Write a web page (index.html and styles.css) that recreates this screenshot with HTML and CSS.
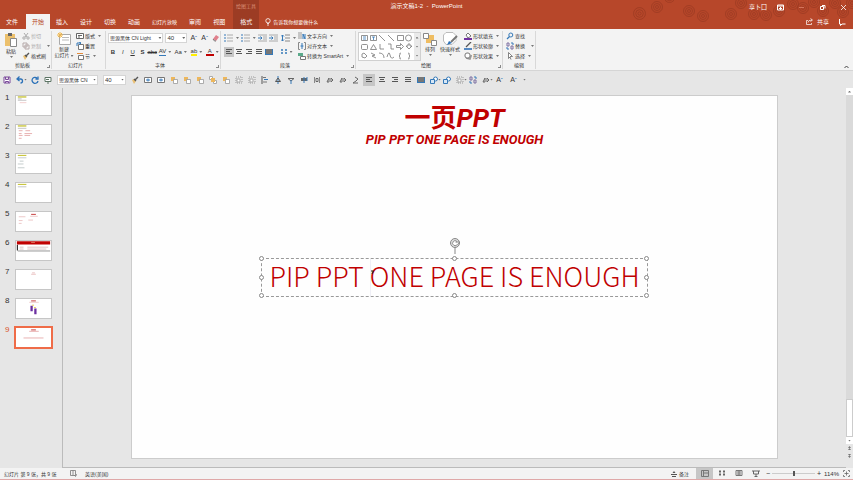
FILE: index.html
```
<!DOCTYPE html>
<html lang="zh-CN">
<head>
    <meta charset="UTF-8">
    <meta name="viewport" content="width=device-width, initial-scale=1.0">
    <title>演示文稿1-2 - PowerPoint</title>
    <link rel="stylesheet" href="styles.css">
</head>
<body>
    <!-- shared icons -->
    <svg class="sprite" aria-hidden="true">
        <symbol id="rings" viewBox="0 0 12 12"><g fill="none" stroke="#9a3a22" stroke-width=".7"><circle cx="6" cy="6" r="5.5"/><circle cx="6" cy="6" r="3.5"/><circle cx="6" cy="6" r="1.5"/></g></symbol>
        <symbol id="cut" viewBox="0 0 8 8"><path d="M2 1l3 4M6 1L3 5" stroke="#aaa" fill="none"/><circle cx="2" cy="6" r="1.2" fill="none" stroke="#aaa"/><circle cx="6" cy="6" r="1.2" fill="none" stroke="#aaa"/></symbol>
        <symbol id="copy" viewBox="0 0 8 8"><path d="M1 1h4v4H1zM3 3h4v4H3z" fill="#f3f3f3" stroke="#b5a8a8"/></symbol>
        <symbol id="brush" viewBox="0 0 8 8"><path d="M1 4l2-1 2 2-2 3z" fill="#eabf72"/><path d="M3 3l2 2M4 4l3-3" stroke="#555" stroke-width="1.4"/></symbol>
        <symbol id="layout" viewBox="0 0 8 8"><path d="M.5 1.5h7v5h-7zM2 3.500h4M2 5h2" fill="#fff" stroke="#666"/></symbol>
        <symbol id="reset" viewBox="0 0 8 8"><path d="M2.500 2.500h5v5h-5z" fill="#fff" stroke="#777"/><path d="M1 4V1h4M3 0L5 1 3 3" fill="none" stroke="#3579b8"/></symbol>
        <symbol id="section" viewBox="0 0 8 8"><path d="M1 1.500h6" stroke="#e58b3a"/><path d="M2.500 3.500h5v4h-5z" fill="#fff" stroke="#777"/></symbol>
        <symbol id="bullets" viewBox="0 0 10 8"><path d="M0 1h2M0 4h2M0 7h2" stroke="#3579b8"/><path d="M3 1h6M3 4h6M3 7h6" stroke="#aaa"/></symbol>
        <symbol id="indent" viewBox="0 0 10 8"><path d="M0 1h9M5 3h4M5 5h4M0 7h9" stroke="#aaa"/><path d="M0 4h4M2.500 2.500L4 4 2.500 5.500" stroke="#3579b8" fill="none"/></symbol>
        <symbol id="spacing" viewBox="0 0 10 8"><path d="M1.500 1v6M0 2.500L1.500 1 3 2.500M0 5.500L1.500 7 3 5.500" stroke="#3579b8" fill="none"/><path d="M4 1h5M4 4h5M4 7h5" stroke="#888"/></symbol>
        <symbol id="al" viewBox="0 0 8 8"><path d="M1 1.500h6M1 3.500h4M1 5.500h6" stroke="#555"/></symbol>
        <symbol id="ac" viewBox="0 0 8 8"><path d="M1 1.500h6M2 3.500h4M1 5.500h6" stroke="#555"/></symbol>
        <symbol id="ar" viewBox="0 0 8 8"><path d="M1 1.500h6M3 3.500h4M1 5.500h6" stroke="#555"/></symbol>
        <symbol id="aj" viewBox="0 0 8 8"><path d="M1 1.500h6M1 3.500h6M1 5.500h6" stroke="#555"/></symbol>
        <symbol id="dist" viewBox="0 0 8 8"><path d="M1 1h6v5H1z" fill="#777"/><path d="M.5 1v6M7.500 1v6M1 6.500h6" stroke="#3579b8"/></symbol>
        <symbol id="cols" viewBox="0 0 8 8"><path d="M1 2h2M5 2h2M1 5h2M5 5h2" stroke="#3579b8" stroke-width="1.500"/></symbol>
        <symbol id="textdir" viewBox="0 0 8 8"><path d="M1 0v7M3 0v7" stroke="#999"/><path d="M5 7V2l2 5V2" stroke="#3579b8" fill="none"/></symbol>
        <symbol id="textalign" viewBox="0 0 8 8"><path d="M2 .5H.5v7H2M6 .5h1.500v7H6" fill="none" stroke="#888"/><path d="M4 1v6M2.500 4h3" stroke="#3579b8"/></symbol>
        <symbol id="smartart" viewBox="0 0 8 8"><path d="M0 1h5v3H0z" fill="#5ba98a"/><path d="M2.500 4.500h5v3h-5z" fill="#fff" stroke="#777"/></symbol>
        <symbol id="fill" viewBox="0 0 8 8"><path d="M2 3l2-2 3 3-3 2z" fill="#fff" stroke="#555" stroke-width=".8"/><path d="M0 7h8" stroke="#7030a0" stroke-width="2"/></symbol>
        <symbol id="outline" viewBox="0 0 8 8"><path d="M2 5l5-5" stroke="#555" stroke-width="1.300"/><path d="M0 7h8" stroke="#2f6eb5" stroke-width="1.600"/></symbol>
        <symbol id="effect" viewBox="0 0 8 8"><path d="M2 6l4 1 1.500-4" stroke="#999" stroke-width="1.500" fill="none"/><rect x="1" y="1" width="5" height="5" rx="2" fill="#fff" stroke="#777"/></symbol>
        <symbol id="find" viewBox="0 0 8 8"><circle cx="4.800" cy="3" r="2" fill="none" stroke="#3579b8"/><path d="M3.500 4.500L1 7" stroke="#3579b8" stroke-width="1.300"/></symbol>
        <symbol id="replace" viewBox="0 0 8 8"><path d="M1 1h2v3H1zM5 4h2v3H5z" fill="none" stroke="#7d6ea0"/><path d="M5 1h2v2M3 7H1V5" stroke="#3579b8" fill="none"/></symbol>
        <symbol id="pointer" viewBox="0 0 8 8"><path d="M2.500 .5v6l1.500-1.500 1 2.500M2.500.5l4 4H4" fill="#fff" stroke="#666" stroke-width=".8"/></symbol>
        <symbol id="save" viewBox="0 0 8 8"><path d="M1 1h6v6H1zM2.500 1v2.500h3V1M2.500 7V5.500h3V7" fill="#fff" stroke="#7b4a9b"/></symbol>
        <symbol id="undo" viewBox="0 0 8 8"><path d="M1 3h3.500a2 2 0 010 4M3.500 .5L1 3l2.500 2" stroke="#2b71b8" stroke-width="1.300" fill="none"/></symbol>
        <symbol id="redo" viewBox="0 0 8 8"><path d="M6 2a3 3 0 101 3M7 .5V3H4.500" stroke="#2b71b8" stroke-width="1.300" fill="none"/></symbol>
        <symbol id="show" viewBox="0 0 8 8"><path d="M1 1.500h6v4H1zM4 5v3M2 3.500h3" fill="#fff" stroke="#5d7565"/></symbol>
        <symbol id="box" viewBox="0 0 8 8"><path d="M.5 1.500h7v5h-7z" fill="#fff" stroke="#777"/><path d="M2 4h4M4 2.500v3" stroke="#3579b8"/></symbol>
        <symbol id="layers" viewBox="0 0 8 8"><path d="M1 1h4v4H1z" fill="#edb75c"/><path d="M3.500 3.500h4v4h-4z" fill="#fff" stroke="#999" stroke-width=".8"/></symbol>
        <symbol id="front" viewBox="0 0 8 8"><path d="M.5.5h3v3h-3zM4.500 4.500h3v3h-3z" fill="#fff" stroke="#aaa"/><path d="M2 2h4v4H2z" fill="#edb75c"/></symbol>
        <symbol id="group" viewBox="0 0 8 8"><path d="M1 1h6v6H1z" fill="none" stroke="#999" stroke-dasharray="1 1"/><path d="M2 3h3v3H2z" fill="#fff" stroke="#aaa"/></symbol>
        <symbol id="posleft" viewBox="0 0 8 8"><path d="M1 0v8" stroke="#555"/><path d="M2 1.500h3M2 6h4" stroke="#777"/><path d="M3 3.500h4" stroke="#3579b8"/></symbol>
        <symbol id="posmid" viewBox="0 0 8 8"><path d="M4 0v8" stroke="#3579b8"/><path d="M1.500 5.500L4 2l2.500 3.500z" fill="none" stroke="#555"/></symbol>
        <symbol id="posdown" viewBox="0 0 8 8"><path d="M1 2.500h6L4 5z" fill="none" stroke="#666"/><path d="M4 4v4" stroke="#3579b8"/></symbol>
        <symbol id="bars" viewBox="0 0 8 8"><path d="M1 2h6v3H1z" fill="#666"/><path d="M4 1v6M7 1v4" stroke="#3579b8"/></symbol>
        <symbol id="posbars" viewBox="0 0 8 8"><path d="M1.500 1v6M6.500 1v6" stroke="#888"/><path d="M3 2.500h2v3H3z" fill="#fff" stroke="#666"/></symbol>
        <symbol id="flip" viewBox="0 0 8 8"><path d="M1 6l2-4v4zM5 2v4l2-2z" fill="#fff" stroke="#666"/></symbol>
        <symbol id="node" viewBox="0 0 8 8"><path d="M3 1l3 2-2 2-3 2h5" fill="none" stroke="#666"/></symbol>
        <symbol id="shapes" viewBox="0 0 8 8"><circle cx="5.500" cy="3" r="2" fill="#fff" stroke="#3579b8"/><path d="M.5 3.500h4v4h-4z" fill="#d7e7f6" stroke="#3579b8"/></symbol>
    </svg>

    <header class="top">
        <svg class="pattern" viewBox="0 0 220 29" aria-hidden="true">
            <use href="#rings" x="0" y="7" width="13" height="13"/>
            <use href="#rings" x="18" y="1" width="12" height="12"/>
            <use href="#rings" x="31" y="-8" width="11" height="11"/>
            <use href="#rings" x="50" y="5" width="12" height="12"/>
            <use href="#rings" x="64" y="10" width="12" height="12"/>
            <use href="#rings" x="92" y="8" width="12" height="12"/>
            <use href="#rings" x="102" y="-3" width="12" height="12"/>
            <use href="#rings" x="115" y="8" width="12" height="12"/>
            <use href="#rings" x="127" y="9" width="12" height="12"/>
            <use href="#rings" x="140" y="5" width="12" height="12"/>
            <use href="#rings" x="154" y="-2" width="12" height="12"/>
            <use href="#rings" x="164" y="2" width="12" height="12"/>
            <use href="#rings" x="175" y="-4" width="12" height="12"/>
            <use href="#rings" x="184" y="5" width="12" height="12"/>
            <use href="#rings" x="196" y="-3" width="12" height="12"/>
            <use href="#rings" x="204" y="6" width="12" height="12"/>
            <use href="#rings" x="213" y="-3" width="12" height="12"/>
        </svg>
        <div class="titlebar">
            <div class="title-left"><span class="tools">绘图工具</span></div>
            <div class="doc-name">演示文稿1-2 &nbsp;-&nbsp; PowerPoint</div>
            <div class="window-buttons">
                <span class="user">享卜囗</span>
                <button aria-label="功能区显示选项"><svg width="7" height="7" viewBox="0 0 7 7"><path d="M.5 1h6v5h-6zM1 2h5M3.500 3v3M2 4.500h3" fill="none" stroke="#fff"/></svg></button>
                <button aria-label="最小化"><svg width="7" height="7" viewBox="0 0 7 7"><path d="M1 3.500h5" stroke="#d4745c"/></svg></button>
                <button aria-label="还原"><svg width="7" height="7" viewBox="0 0 7 7"><path d="M1.500 2.500h3v3h-3zM3 1.500h3v3" fill="none" stroke="#fff"/></svg></button>
                <button aria-label="关闭"><svg width="7" height="7" viewBox="0 0 7 7"><path d="M1 1l5 5M6 1L1 6" stroke="#fff" stroke-width=".8"/></svg></button>
            </div>
        </div>
        <nav class="tabs">
            <button class="tab file">文件</button>
            <button class="tab active">开始</button>
            <button class="tab">插入</button>
            <button class="tab">设计</button>
            <button class="tab">切换</button>
            <button class="tab">动画</button>
            <button class="tab long">幻灯片放映</button>
            <button class="tab">审阅</button>
            <button class="tab">视图</button>
            <button class="tab context">格式</button>
            <button class="tell-me"><svg width="6" height="8" viewBox="0 0 6 8"><circle cx="3" cy="2.800" r="2.200" fill="none" stroke="#fff" stroke-width=".8"/><path d="M2 5.500h2M2 7h2" stroke="#fff" stroke-width=".8"/></svg>告诉我你想要做什么</button>
            <div class="share">
                <button><svg width="7" height="7" viewBox="0 0 7 7"><path d="M2 2.500H.5v4h5V5M2 4.500q0-2.500 4-2.500M4.500.5L6.500 2 4.500 3.500" fill="none" stroke="#fff" stroke-width=".7"/></svg>共享</button>
                <button aria-label="批注"><svg width="8" height="8" viewBox="0 0 8 8"><path d="M1.500 1v5h1v1.500L4 6h3.500" fill="none" stroke="#fff"/></svg></button>
            </div>
        </nav>
    </header>

    <section class="ribbon">
        <div class="group clipboard">
            <div class="group-body">
                <button class="big">
                    <svg width="14" height="16" viewBox="0 0 14 16"><path d="M1 2h10v12H1z" fill="#ecc06c"/><path d="M4 1h4v3H4z" fill="#666"/><path d="M6.500 6.500h6v8h-6z" fill="#fff" stroke="#888"/></svg>
                    <span>粘贴</span><i class="arrow"></i>
                </button>
                <div class="stack">
                    <button class="off"><svg><use href="#cut"/></svg>剪切</button>
                    <button class="off"><svg><use href="#copy"/></svg>复制<i class="arrow far"></i></button>
                    <button><svg><use href="#brush"/></svg>格式刷</button>
                </div>
            </div>
            <div class="group-name">剪贴板</div><i class="launcher"></i>
        </div>
        <div class="group slides">
            <div class="group-body">
                <button class="big">
                    <svg width="14" height="14" viewBox="0 0 14 14"><path d="M2.500 2.500h11v10h-11z" fill="#fff" stroke="#aaa"/><path d="M5 5.500h7M5 8h7" stroke="#bbb"/><path d="M3 0v6M0 3h6M1 1l4 4M5 1L1 5" stroke="#f0b64a"/></svg>
                    <span>新建<br>幻灯片<i class="arrow"></i></span>
                </button>
                <div class="stack">
                    <button><svg><use href="#layout"/></svg>版式<i class="arrow"></i></button>
                    <button><svg><use href="#reset"/></svg>重置</button>
                    <button><svg><use href="#section"/></svg>节<i class="arrow"></i></button>
                </div>
            </div>
            <div class="group-name">幻灯片</div>
        </div>
        <div class="group font">
            <div class="group-body rows">
                <div class="row">
                    <span class="pick name"><select aria-label="字体"><option>思源黑体 CN Light</option></select></span>
                    <span class="pick size"><select aria-label="字号"><option>40</option></select></span>
                    <button class="letter">A<sup>ˆ</sup></button>
                    <button class="letter">A<sup>ˇ</sup></button>
                    <button class="letter" aria-label="清除格式"><svg viewBox="0 0 8 8"><path d="M1 5l3-4 3 2-3 4z" fill="#e0808c"/><path d="M1 5l1.500 2H4" stroke="#777" fill="none"/></svg></button>
                </div>
                <div class="row letters">
                    <button><b>B</b></button>
                    <button><em>I</em></button>
                    <button><u>U</u></button>
                    <button><b>S</b></button>
                    <button><s>abc</s></button>
                    <button class="wide"><span class="av">AV</span><i class="arrow"></i></button>
                    <button class="wide">Aa<i class="arrow"></i></button>
                    <button class="wide"><span class="mark">ab</span><i class="arrow"></i></button>
                    <button class="wide"><span class="color">A</span><i class="arrow"></i></button>
                </div>
            </div>
            <div class="group-name">字体</div><i class="launcher"></i>
        </div>
        <div class="group paragraph">
            <div class="group-body">
                <div class="rows">
                    <div class="row para-row">
                        <button aria-label="项目符号"><svg><use href="#bullets"/></svg><i class="arrow"></i></button>
                        <button aria-label="编号"><svg><use href="#bullets"/></svg><i class="arrow"></i></button>
                        <button aria-label="减少缩进"><svg><use href="#indent"/></svg></button>
                        <button aria-label="增加缩进"><svg><use href="#indent"/></svg></button>
                        <button aria-label="行距"><svg><use href="#spacing"/></svg><i class="arrow"></i></button>
                    </div>
                    <div class="row align-row">
                        <button class="on" aria-label="左对齐"><svg><use href="#al"/></svg></button>
                        <button aria-label="居中"><svg><use href="#ac"/></svg></button>
                        <button aria-label="右对齐"><svg><use href="#ar"/></svg></button>
                        <button aria-label="两端对齐"><svg><use href="#aj"/></svg></button>
                        <button aria-label="分散对齐"><svg><use href="#dist"/></svg></button>
                        <button class="columns" aria-label="分栏"><svg><use href="#cols"/></svg><i class="arrow"></i></button>
                    </div>
                </div>
                <div class="stack">
                    <button><svg><use href="#textdir"/></svg>文字方向<i class="arrow"></i></button>
                    <button><svg><use href="#textalign"/></svg>对齐文本<i class="arrow"></i></button>
                    <button><svg><use href="#smartart"/></svg>转换为 SmartArt<i class="arrow"></i></button>
                </div>
            </div>
            <div class="group-name">段落</div><i class="launcher"></i>
        </div>
        <div class="group drawing">
            <div class="group-body">
                <div class="gallery">
                    <svg width="55" height="27" viewBox="0 0 55 27" fill="none" stroke="#777" stroke-width=".8">
                        <path d="M2.500 2.500h6v5h-6zM11.500 2.500h6v5h-6z"/><path d="M4 4h3M4 6h3M13 4h3M14.500 4v3" stroke="#3579b8"/>
                        <path d="M20 2l6 6M29 2l6 6M38.500 2.500h6v5h-6z"/><circle cx="49.500" cy="5" r="3"/>
                        <rect x="2.500" y="11.500" width="6" height="5" rx="1"/><path d="M11.500 16.500l3-5 3 5zM21 11v5h4M29 11h3v5h3M37.500 12.500h4v-2l3 3-3 3v-2h-4zM47 13h2v-2h2v2h2l-3 3z"/>
                        <path d="M3 24v-3l2-1 3 3-2 2zM12 20l4 2-3 1 4 2M20 20q5 0 5 5M28 24q2-7 3-2t4 2M42 20q-2 0-1 2l-1 1 1 1q-1 2 1 2M49 20q2 0 1 2l1 1-1 1q1 2-1 2"/>
                    </svg>
                    <div class="gallery-bar"><i class="arrow up"></i><i class="arrow"></i><i class="arrow"></i></div>
                </div>
                <button class="big arrange">
                    <svg width="14" height="14" viewBox="0 0 14 14"><path d="M3 3h8v8H3z" fill="#efbd62"/><path d="M.5 1.500h5v5h-5zM8.500 8.500h5v5h-5z" fill="#fff" stroke="#888"/></svg>
                    <span>排列</span><i class="arrow"></i>
                </button>
                <button class="big quick">
                    <svg width="15" height="14" viewBox="0 0 15 14"><path d="M3 .5h7l3 3v5l-4 4H3L.5 9V3z" fill="#fff" stroke="#bbb"/><path d="M14 4l-6 6" stroke="#777" stroke-width="2"/><path d="M4 13l2-4 3 2z" fill="#2b71b8"/></svg>
                    <span>快速样式</span><i class="arrow"></i>
                </button>
                <div class="stack">
                    <button><svg><use href="#fill"/></svg>形状填充<i class="arrow"></i></button>
                    <button><svg><use href="#outline"/></svg>形状轮廓<i class="arrow"></i></button>
                    <button><svg><use href="#effect"/></svg>形状效果<i class="arrow"></i></button>
                </div>
            </div>
            <div class="group-name">绘图</div><i class="launcher"></i>
        </div>
        <div class="group editing">
            <div class="group-body">
                <div class="stack">
                    <button><svg><use href="#find"/></svg>查找</button>
                    <button><svg><use href="#replace"/></svg>替换<i class="arrow far"></i></button>
                    <button><svg><use href="#pointer"/></svg>选择<i class="arrow"></i></button>
                </div>
            </div>
            <div class="group-name">编辑</div>
        </div>
        <button class="collapse" aria-label="折叠功能区"><svg width="5" height="4" viewBox="0 0 5 4"><path d="M.5 3l2-2 2 2" fill="none" stroke="#444"/></svg></button>
    </section>

    <div class="quick-bar">
        <button><svg><use href="#save"/></svg></button>
        <button><svg><use href="#undo"/></svg><i class="arrow"></i></button>
        <button class="redo"><svg><use href="#redo"/></svg></button>
        <button><svg><use href="#show"/></svg></button>
        <span class="pick q-name"><select aria-label="字体"><option>思源黑体 CN</option></select></span>
        <span class="pick q-size"><select aria-label="字号"><option>40</option></select></span>
        <button><svg><use href="#brush"/></svg></button>
        <button><svg><use href="#box"/></svg></button>
        <button><svg><use href="#box"/></svg></button>
        <button><svg><use href="#layers"/></svg></button>
        <button><svg><use href="#layers"/></svg></button>
        <button><svg><use href="#layers"/></svg></button>
        <button><svg><use href="#front"/></svg></button>
        <button><svg><use href="#layers"/></svg></button>
        <button><svg><use href="#group"/></svg></button>
        <button><svg><use href="#group"/></svg></button>
        <button><svg><use href="#posleft"/></svg></button>
        <button><svg><use href="#posmid"/></svg></button>
        <button><svg><use href="#posdown"/></svg></button>
        <button><svg><use href="#bars"/></svg></button>
        <button><svg><use href="#posbars"/></svg></button>
        <button><svg><use href="#flip"/></svg></button>
        <button><svg><use href="#flip"/></svg></button>
        <button><svg><use href="#node"/></svg></button>
        <button class="on"><svg><use href="#al"/></svg></button>
        <button><svg><use href="#ac"/></svg></button>
        <button><svg><use href="#ar"/></svg></button>
        <button><svg><use href="#aj"/></svg></button>
        <button><svg><use href="#dist"/></svg></button>
        <button><svg><use href="#shapes"/></svg><i class="arrow"></i></button>
        <button><svg><use href="#shapes"/></svg></button>
        <button><svg><use href="#group"/></svg><i class="arrow"></i></button>
        <button><svg><use href="#replace"/></svg></button>
        <button><svg><use href="#flip"/></svg><i class="arrow"></i></button>
        <button class="letter">A<sup>ˆ</sup></button>
        <button class="letter">A<sup>ˇ</sup></button>
        <button aria-label="自定义"><i class="arrow"></i></button>
    </div>

    <div class="workspace">
        <aside class="thumbs">
            <div class="thumb"><span>1</span><svg viewBox="0 0 35 20"><path d="M1 1h9" stroke="#c9c640" stroke-width="1.500"/><path d="M1 3h4M1 4.500h9" stroke="#999" stroke-width=".6"/><path d="M3 7h7" stroke="#e7a0a0" stroke-width=".5"/></svg></div>
            <div class="thumb"><span>2</span><svg viewBox="0 0 35 20"><path d="M1 1h9" stroke="#c9c640" stroke-width="1.500"/><path d="M1 3.500h9" stroke="#999" stroke-width=".6"/><path d="M2 6h4M9 6h5M2 9h3M8 9h8M2 11h4M8 11h6M2 14h3" stroke="#dd8c8c" stroke-width=".7"/></svg></div>
            <div class="thumb"><span>3</span><svg viewBox="0 0 35 20"><path d="M1 1.500h9" stroke="#c9c640" stroke-width="1.200"/><path d="M1 4h9M3 7.500h4M1 10.500h6M1 14.500h7" stroke="#9aa8a8" stroke-width=".6"/></svg></div>
            <div class="thumb"><span>4</span><svg viewBox="0 0 35 20"><path d="M1 1.500h9" stroke="#c9c640" stroke-width="1.200"/><path d="M1 4h9" stroke="#999" stroke-width=".6"/></svg></div>
            <div class="thumb"><span>5</span><svg viewBox="0 0 35 20"><path d="M15 2.500h5" stroke="#c43838"/><path d="M2 5h7M14 4.500h8M2 9h4M12 8.500h5M2 12h3" stroke="#e0a0a0" stroke-width=".6"/></svg></div>
            <div class="thumb"><span>6</span><svg viewBox="0 0 35 20"><path d="M0 2h35" stroke="#c00000" stroke-width="3.500"/><path d="M15 1.500h4" stroke="#f0a080" stroke-width=".7"/><path d="M.5 4v6" stroke="#000"/><path d="M3 6.500h4M11 6.500h22M3 8.500h4M11 8.500h20" stroke="#c49a9a" stroke-width=".6"/><path d="M1 10.500h34" stroke="#777" stroke-width=".8"/></svg></div>
            <div class="thumb"><span>7</span><svg viewBox="0 0 35 20"><path d="M16 3h3M15 4.500h5" stroke="#dc9a9a" stroke-width=".6"/></svg></div>
            <div class="thumb"><span>8</span><svg viewBox="0 0 35 20"><path d="M15 2h5" stroke="#c43838"/><path d="M13 3.500h10" stroke="#dc9a9a" stroke-width=".5"/><path d="M15.500 7v6M19.500 10v6" stroke="#6b2fa0" stroke-width="2.400"/><path d="M16 6.500h2M18 9h2" stroke="#e8c850"/></svg></div>
            <div class="thumb current"><span>9</span><svg viewBox="0 0 35 20"><path d="M15 2h5" stroke="#c43838"/><path d="M13 3.500h10M7 10.500h21" stroke="#dc8a8a" stroke-width=".7"/></svg></div>
        </aside>
        <main class="canvas">
            <div class="slide">
                <h1>一页<em>PPT</em></h1>
                <p class="subtitle">PIP PPT ONE PAGE IS ENOUGH</p>
                <div class="textbox">
                    PIP PPT ONE PAGE IS ENOUGH
                    <svg class="rotate" width="11" height="16" viewBox="0 0 11 16"><circle cx="5" cy="5" r="4.500" fill="#ddd" stroke="#888"/><path d="M7 3.500A2.500 2.500 0 107.500 6M5.500 4h4L8 6.500" fill="#fff" stroke="#777" stroke-width=".8"/><path d="M5 9.500V16" stroke="#888"/></svg>
                    <svg class="caret" width="4" height="37" viewBox="0 0 4 37"><path d="M.5 0v37" stroke="#8080c0" stroke-opacity=".12"/><path d="M1 12h2.500L2 15" stroke="#222" fill="none"/></svg>
                    <i class="handle nw"></i><i class="handle n"></i><i class="handle ne"></i>
                    <i class="handle w"></i><i class="handle e"></i>
                    <i class="handle sw"></i><i class="handle s"></i><i class="handle se"></i>
                </div>
            </div>
        </main>
        <div class="scrollbar">
            <button aria-label="向上滚动"><i class="arrow up"></i></button>
            <div class="track"><div class="scroll-thumb"></div></div>
            <button aria-label="向下滚动"><i class="arrow"></i></button>
            <button class="jump" aria-label="上一张"><i class="arrow up"></i><i class="arrow up"></i></button>
            <button class="jump" aria-label="下一张"><i class="arrow"></i><i class="arrow"></i></button>
        </div>
    </div>

    <footer class="status">
        <span class="page">幻灯片 第 9 张，共 9 张</span>
        <svg width="7" height="7" viewBox="0 0 7 7"><path d="M.5.5h5v5h-5zM3 .5v5M4.500 5l1 1.500L7 4" fill="none" stroke="#777" stroke-width=".8"/></svg>
        <span class="lang">英语(美国)</span>
        <div class="status-right">
            <button class="notes"><svg width="6" height="6" viewBox="0 0 6 6"><path d="M0 3.500h6M1 5.500h4" stroke="#555"/><path d="M3 0L4.500 2h-3z" fill="#555"/></svg>备注</button>
            <button class="view on" aria-label="普通视图"><svg width="8" height="7" viewBox="0 0 8 7"><path d="M.5.5h7v6h-7zM2.500.5v6M3 3h4" fill="none" stroke="#777"/></svg></button>
            <button class="view" aria-label="浏览视图"><svg width="8" height="7" viewBox="0 0 8 7"><path d="M1 1.500h2M5 1.500h2M1 4.500h2M5 4.500h2" stroke="#666" stroke-width="2"/></svg></button>
            <button class="view" aria-label="阅读视图"><svg width="8" height="7" viewBox="0 0 8 7"><path d="M1 .5h6v5H1zM4 .5v5M2 2h4M2 4h4" fill="none" stroke="#777"/></svg></button>
            <button class="view" aria-label="放映"><svg width="8" height="7" viewBox="0 0 8 7"><path d="M0 1h8M1.500 1v3h5V1M4 4v3M2.500 6.500h3" fill="none" stroke="#666"/></svg></button>
            <button class="zoom-step">−</button>
            <input type="range" aria-label="缩放" min="0" max="100" value="50">
            <button class="zoom-step">+</button>
            <span class="percent">114%</span>
            <button class="fit" aria-label="适应窗口"><svg width="7" height="7" viewBox="0 0 7 7"><path d="M.5 2V.5H2M5 .5h1.500V2M6.500 5v1.500H5M2 6.500H.5V5M3.500 1.500v4M1.500 3.500h4" fill="none" stroke="#666" stroke-width=".8"/></svg></button>
        </div>
    </footer>
</body>
</html>
```
FILE: styles.css
```
* {
    box-sizing: border-box;
}

body {
    margin: 0;
    height: 100vh;
    display: flex;
    flex-direction: column;
    overflow: hidden;
    background-color: #e6e6e6;
    color: #333;
    font-family: "Liberation Sans", "Noto Sans CJK SC", sans-serif;
    font-size: 5px;
    line-height: 8px;
}

button {
    display: flex;
    align-items: center;
    padding: 0;
    border: none;
    background: none;
    color: inherit;
    font: inherit;
    white-space: nowrap;
    cursor: pointer;
}

svg {
    flex: none;
    display: block;
}

.sprite {
    position: absolute;
    width: 0;
    height: 0;
}

.arrow {
    flex: none;
    display: inline-block;
    width: 3px;
    height: 2px;
    margin-left: 2px;
    background-color: #777;
    clip-path: polygon(0 0, 100% 0, 50% 100%);
}

.arrow.up {
    clip-path: polygon(50% 0, 100% 100%, 0 100%);
}

.on {
    background-color: #c6c6c6;
}

/* title bar and tabs */
.top {
    position: relative;
    flex: none;
    background-color: #b7472a;
    color: #fff;
    font-size: 6px;
}

.pattern {
    position: absolute;
    top: 0;
    right: 0;
    width: 220px;
    height: 29px;
}

.titlebar {
    position: relative;
    display: grid;
    grid-template-columns: 1fr auto 1fr;
    height: 14px;
    line-height: 13px;
}

.tools {
    display: block;
    width: 26px;
    height: 14px;
    margin-left: 233px;
    background-color: #9c3c24;
    color: #d98d75;
    font-size: 5px;
    text-align: center;
}

.window-buttons {
    display: flex;
    justify-content: flex-end;
    align-items: center;
    gap: 14px;
    padding-right: 6px;
}

.user {
    margin-right: -4px;
}

.tabs {
    position: relative;
    display: flex;
    height: 15px;
}

.tab {
    justify-content: center;
    padding: 0 6px;
}

.tab.file {
    padding: 0 8px 0 6px;
}

.tab.active {
    background-color: #f3f3f3;
    color: #b7472a;
}

.tab.long {
    font-size: 5px;
}

.tab.context {
    width: 26px;
    margin-left: 2px;
    background-color: #9c3c24;
}

.tell-me {
    gap: 2px;
    margin-left: 6px;
    font-size: 5px;
}

.share {
    display: flex;
    gap: 9px;
    margin-left: auto;
    padding-right: 7px;
}

.share button {
    gap: 4px;
}

/* ribbon */
.ribbon {
    position: relative;
    flex: none;
    display: flex;
    height: 42px;
    padding: 2px 0 1px;
    border-bottom: 1px solid #d5d5d5;
    background-color: #f3f3f3;
}

.group {
    position: relative;
    display: flex;
    flex-direction: column;
    border-right: 1px solid #d8d8d8;
}

.group-body {
    flex: 1;
    display: flex;
}

.group-name {
    height: 8px;
    padding-right: 6px;
    text-align: center;
}

.editing .group-name {
    padding-right: 0;
}

.launcher {
    position: absolute;
    right: 1px;
    bottom: 1px;
    width: 3px;
    height: 3px;
    border-right: 1px solid #888;
    border-bottom: 1px solid #888;
}

.clipboard {
    width: 52px;
}

.slides {
    width: 54px;
}

.font {
    width: 115px;
}

.paragraph {
    width: 135px;
}

.drawing {
    width: 147px;
}

.editing {
    width: 33px;
}

.big {
    flex-direction: column;
    width: 22px;
    margin-top: 1px;
    line-height: 6px;
}

.big .arrow {
    margin: 2px 0 0 1px;
}

.stack {
    display: flex;
    flex-direction: column;
}

.stack button {
    height: 10px;
    gap: 1px;
}

.stack svg,
.quick-bar svg,
.letter svg {
    width: 8px;
    height: 8px;
}

.stack .arrow {
    margin-left: 2px;
}

.stack .far {
    margin-left: 5px;
}

.off {
    color: #aaa;
}

.slides .big {
    width: 24px;
}

.font .group-body {
    padding-left: 2px;
}

.rows {
    display: flex;
    flex-direction: column;
    gap: 4px;
    padding-top: 2px;
}

.row {
    display: flex;
    align-items: center;
    height: 10px;
}

.font .row {
    gap: 2px;
}

.pick {
    position: relative;
    display: flex;
    height: 10px;
}

.pick::after {
    content: "";
    position: absolute;
    top: 4px;
    right: 2px;
    width: 3px;
    height: 2px;
    background-color: #666;
    clip-path: polygon(0 0, 100% 0, 50% 100%);
}

.pick select {
    appearance: none;
    width: 100%;
    padding: 0 1px;
    border: 1px solid #d5d5d5;
    border-radius: 0;
    background-color: #fff;
    color: #333;
    font: inherit;
}

.name {
    width: 56px;
}

.size,
.q-size {
    font-size: 6px;
}

.size {
    width: 22px;
}

.letter {
    width: 9px;
    font-size: 7px;
    justify-content: center;
}

.letter sup {
    color: #2b71b8;
    font-size: 6px;
    line-height: 4px;
}

.letters {
    font-size: 6px;
}

.font .letters {
    gap: 0;
}

.letters button {
    width: 10px;
    justify-content: center;
}

.letters .wide {
    width: 16px;
}

.av {
    border-bottom: 1px solid #3579b8;
    line-height: 7px;
}

.mark {
    border-bottom: 2px solid #ffee00;
    line-height: 6px;
}

.color {
    padding: 0 2px;
    border-bottom: 2px solid #c00000;
    line-height: 6px;
}

.paragraph .rows {
    width: 77px;
    padding-left: 3px;
}

.para-row svg {
    width: 10px;
    height: 8px;
}

.para-row {
    justify-content: space-between;
    padding-right: 2px;
}

.align-row button {
    width: 10px;
    height: 10px;
    justify-content: center;
}

.align-row svg {
    width: 8px;
    height: 8px;
}

.align-row .columns {
    width: 14px;
    margin-left: 5px;
}

.drawing .group-body {
    padding-left: 2px;
    gap: 1px;
}

.gallery {
    display: flex;
    align-self: flex-start;
    margin-top: 1px;
    border: 1px solid #d0d0d0;
    background-color: #fff;
}

.gallery-bar {
    display: flex;
    flex-direction: column;
    justify-content: space-around;
    align-items: center;
    width: 6px;
    background-color: #eaeaea;
}

.gallery-bar .arrow {
    margin: 0;
}

.arrange {
    width: 16px;
}

.drawing .stack {
    margin-left: 2px;
}

.editing .group-body {
    padding-left: 3px;
}

.collapse {
    align-self: flex-end;
    margin-left: auto;
    padding: 0 4px 0 0;
}

/* second toolbar */
.quick-bar {
    flex: none;
    display: flex;
    align-items: center;
    gap: 5px;
    height: 17px;
    padding: 0 3px;
}

.quick-bar button {
    height: 12px;
}

.quick-bar button .arrow {
    margin: 0 -3px 0 0;
}

.quick-bar .redo {
    margin-left: 2px;
}

.quick-bar .on {
    margin: 0 -2px;
    padding: 0 2px;
}

.q-name {
    width: 41px;
}

.q-size {
    width: 23px;
}

/* slide list */
.workspace {
    flex: 1;
    display: flex;
    min-height: 0;
}

.thumbs {
    width: 63px;
    display: flex;
    flex-direction: column;
    gap: 8px;
    padding-top: 7px;
    border-right: 1px solid #bbb;
}

.thumb {
    display: flex;
    gap: 4px;
    height: 21px;
    padding-left: 5px;
    font-size: 8px;
    line-height: 5px;
}

.thumb span {
    width: 6px;
}

.thumb svg {
    width: 37px;
    height: 21px;
    border: 1px solid #c6c6c6;
    background-color: #fff;
}

.thumb.current {
    color: #d9532c;
}

.thumb.current svg {
    outline: 1px solid #ef6c48;
    border-color: #ef6c48;
}

/* slide */
.canvas {
    flex: 1;
    padding: 7px 68px 0;
    border-bottom: 1px solid #bbb;
}

.slide {
    display: flex;
    flex-direction: column;
    align-items: center;
    width: 100%;
    aspect-ratio: 16 / 9;
    padding-top: 8px;
    border: 1px solid #ccc;
    background-color: #fefefe;
    color: #c00000;
}

.slide h1 {
    margin: 0;
    font-family: Roboto, "Noto Sans CJK SC", sans-serif;
    font-size: 26px;
    line-height: 28px;
}

.subtitle {
    margin: 0;
    font-family: Roboto, sans-serif;
    font-size: 13px;
    font-style: italic;
    font-weight: 700;
    line-height: 16px;
}

.textbox {
    position: relative;
    width: 60%;
    margin-top: 110px;
    padding-bottom: 3px;
    border: 1px dashed #999;
    font-family: "Noto Sans CJK SC", sans-serif;
    font-size: 27px;
    font-weight: 300;
    line-height: 34px;
    text-align: center;
    white-space: nowrap;
}

.rotate {
    position: absolute;
    left: calc(50% - 5px);
    top: -21px;
}

.caret {
    position: absolute;
    left: 28%;
    top: 0;
}

.handle {
    position: absolute;
    width: 5px;
    height: 5px;
    margin: -3px;
    border: 1px solid #888;
    border-radius: 50%;
    background-color: #fff;
}

.nw, .n, .ne {
    top: 0;
}

.w, .e {
    top: 50%;
}

.sw, .s, .se {
    top: 100%;
}

.nw, .w, .sw {
    left: 0;
}

.n, .s {
    left: 50%;
}

.ne, .e, .se {
    left: 100%;
}

.scrollbar {
    width: 7px;
    display: flex;
    flex-direction: column;
    padding-bottom: 8px;
}

.scrollbar button {
    justify-content: center;
    height: 7px;
    background-color: #fff;
}

.scrollbar .arrow {
    margin: 0;
}

.scrollbar .jump {
    flex-direction: column;
    height: 8px;
    background: none;
}

.track {
    flex: 1;
    display: flex;
    align-items: flex-end;
    background-color: #dadada;
}

.scroll-thumb {
    width: 100%;
    height: 38px;
    border: 1px solid #ccc;
    background-color: #fff;
}

/* status bar */
.status {
    flex: none;
    display: flex;
    align-items: center;
    gap: 8px;
    height: 12px;
    padding-left: 4px;
    border-bottom: 1px solid #dfa8a8;
    background-color: #f3f3f3;
    white-space: nowrap;
}

.page {
    width: 58px;
}

.status-right {
    display: flex;
    align-items: center;
    height: 100%;
    margin-left: auto;
    padding-right: 3px;
}

.notes {
    gap: 2px;
    margin-right: 7px;
}

.view {
    width: 17px;
    height: 11px;
    justify-content: center;
}

.zoom-step {
    width: 8px;
    justify-content: center;
    font-size: 7px;
}

.status input {
    appearance: none;
    width: 43px;
    height: 9px;
    margin: 0;
    background: linear-gradient(#ccc, #ccc) center / 100% 1px no-repeat;
}

.status input::-webkit-slider-thumb {
    appearance: none;
    width: 2px;
    height: 5px;
    background-color: #555;
}

.percent {
    margin: 0 4px 0 1px;
    font-size: 6px;
}
```
